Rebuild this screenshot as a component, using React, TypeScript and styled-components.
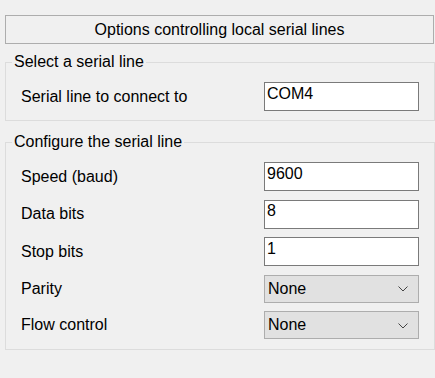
import React from "react";
import styled, { createGlobalStyle } from "styled-components";

const Global = createGlobalStyle`
  html, body { margin: 0; padding: 0; background: #f0f0f0; }
  body { font-family: "Liberation Sans", Arial, sans-serif; font-size: 16px; color: #000; }
`;

const Page = styled.div`
  width: 430px;
  padding: 15px 0 0 5px;
  display: flex;
  flex-direction: column;
`;

const Header = styled.div`
  box-sizing: border-box;
  width: 429px;
  height: 29px;
  border: 1px solid #adadad;
  background: #f0f0f0;
  display: flex;
  align-items: center;
  justify-content: center;
  line-height: 18px;
`;

const Group = styled.fieldset<{ $top: number; $bottom: number }>`
  box-sizing: border-box;
  width: 430px;
  margin: ${(p) => p.$top}px 0 0 0;
  padding: 11px 15px ${(p) => p.$bottom}px 14px;
  border: 1px solid #dcdcdc;
  min-inline-size: 0;
  display: flex;
  flex-direction: column;
  gap: 8.5px;
`;

const Legend = styled.legend`
  margin-left: -8px;
  padding: 0 2px;
  line-height: 18px;
  font-size: 16px;
`;

const Row = styled.div`
  display: flex;
  align-items: center;
  justify-content: space-between;
`;

const Label = styled.span`
  line-height: 18px;
  padding-left: 1px;
`;

const TextBox = styled.input`
  box-sizing: border-box;
  width: 155px;
  height: 29px;
  margin: 0;
  border: 1px solid #7a7a7a;
  background: #fff;
  padding: 1px 2px 7px;
  font-family: "Liberation Sans", Arial, sans-serif;
  font-size: 16px;
  line-height: 18px;
  color: #000;
  outline: none;
`;

const Combo = styled.div`
  box-sizing: border-box;
  width: 155px;
  height: 28px;
  border: 1px solid #adadad;
  background: #e1e1e1;
  display: flex;
  align-items: center;
  justify-content: space-between;
  padding: 0 10px 0 3px;
  line-height: 18px;
`;

const Chevron = () => (
  <svg width="10" height="6" viewBox="0 0 10 6" style={{ marginTop: 1 }}>
    <path d="M0.5 0.5 L5 5 L9.5 0.5" fill="none" stroke="#444" strokeWidth="1" />
  </svg>
);

const Field = ({ label, value }: { label: string; value: string }) => (
  <Row>
    <Label>{label}</Label>
    <TextBox readOnly value={value} />
  </Row>
);

const Choice = ({ label, value }: { label: string; value: string }) => (
  <Row>
    <Label>{label}</Label>
    <Combo>
      <span>{value}</span>
      <Chevron />
    </Combo>
  </Row>
);

export default function App() {
  return (
    <>
      <Global />
      <Page>
        <Header>Options controlling local serial lines</Header>
        <Group $top={9} $bottom={9}>
          <Legend>Select a serial line</Legend>
          <Field label="Serial line to connect to" value="COM4" />
        </Group>
        <Group $top={12} $bottom={10}>
          <Legend>Configure the serial line</Legend>
          <Field label="Speed (baud)" value="9600" />
          <Field label="Data bits" value="8" />
          <Field label="Stop bits" value="1" />
          <Choice label="Parity" value="None" />
          <Choice label="Flow control" value="None" />
        </Group>
      </Page>
    </>
  );
}
